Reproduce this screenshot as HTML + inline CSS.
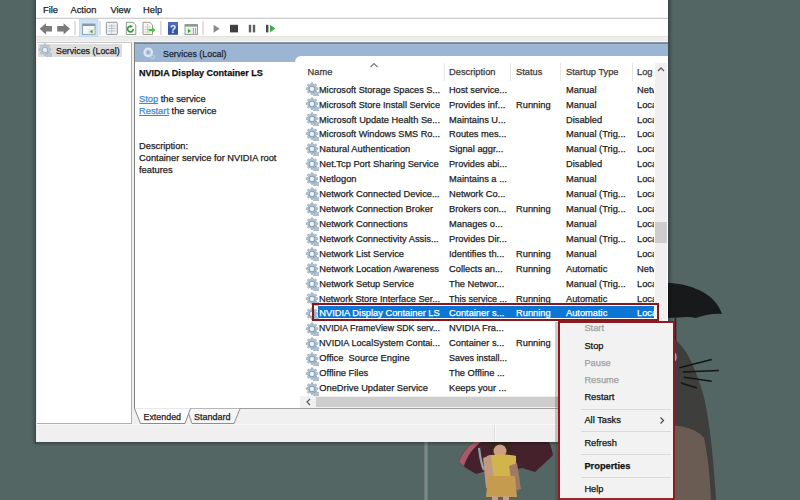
<!DOCTYPE html>
<html><head><meta charset="utf-8">
<style>
*{margin:0;padding:0;box-sizing:border-box}
html,body{width:800px;height:500px;overflow:hidden;background:#536664;font-family:"Liberation Sans",sans-serif;color:#1e1e1e}
.a{position:absolute}
.t{position:absolute;white-space:pre;font-size:9.3px;line-height:12px;-webkit-text-stroke:0.25px currentColor}
</style></head><body>
<svg width="0" height="0" style="position:absolute"><defs>
<symbol id="gr" viewBox="0 0 14 14">
<path d="M6.2 0.8h1.6l0.3 1.5 1.2 0.5 1.3-0.9 1.1 1.1-0.9 1.3 0.5 1.2 1.5 0.3v1.6l-1.5 0.3-0.5 1.2 0.9 1.3-1.1 1.1-1.3-0.9-1.2 0.5-0.3 1.5h-1.6l-0.3-1.5-1.2-0.5-1.3 0.9-1.1-1.1 0.9-1.3-0.5-1.2-1.5-0.3v-1.6l1.5-0.3 0.5-1.2-0.9-1.3 1.1-1.1 1.3 0.9 1.2-0.5z" fill="#b4c6d4" stroke="#8499ab" stroke-width="0.55"/>
<circle cx="7" cy="7" r="2.9" fill="#dbeaf5" stroke="#7890a5" stroke-width="0.9"/>
<circle cx="6.8" cy="6.8" r="1.3" fill="#f6fbff"/>
<path d="M10.6 9.2h1l0.2 0.9 0.8 0.5 0.8-0.4 0.5 0.8-0.6 0.6v1l0.6 0.6-0.5 0.8-0.8-0.4-0.8 0.5-0.2 0.9h-1l-0.2-0.9-0.8-0.5-0.8 0.4-0.5-0.8 0.6-0.6v-1l-0.6-0.6 0.5-0.8 0.8 0.4 0.8-0.5z" fill="#b0c3d2" stroke="#8197a9" stroke-width="0.5"/>
</symbol></defs></svg>
<svg class="a" style="left:0;top:0" width="800" height="500" viewBox="0 0 800 500">
<rect x="424" y="440" width="4" height="60" fill="#6d7a79"/><rect x="425.5" y="440" width="1" height="60" fill="#8a9694"/>
<path d="M459 462 C462 452 468 446 474 442 L549 442 C551 446 552 450 553 455 L546 462 L535 472 L522 468 L505 472 L490 470 L476 474 L466 468 Z" fill="#45222b"/>
<path d="M459 462 C462 453 468 446 474 442 L481 442 C473 448 467 456 464 466 Z" fill="#a85a6a"/>
<path d="M479 448 C480 456 481 464 484 470" stroke="#93a3a3" stroke-width="2.2" fill="none"/>
<path d="M489 442 L512 442 L512 452 C508 457 493 457 489 452 Z" fill="#3a2620"/>
<ellipse cx="500" cy="451" rx="6.5" ry="6.5" fill="#cf9f86"/>
<path d="M487 456 C492 454 508 454 516 456 L516 476 L488 476 Z" fill="#d1b44c"/>
<path d="M483 458 L491 455 L495 486 L486 488 Z" fill="#c09a80"/>
<path d="M509 466 L517 463 L521 489 L513 491 Z" fill="#9e7a66"/>
<path d="M488 476 L515 476 L517 497 L486 497 Z" fill="#c59b50"/>
<rect x="492" y="496" width="6" height="4" fill="#c8a088"/><rect x="503" y="496" width="6" height="4" fill="#c8a088"/>
<path d="M667 283 C688 283 708 292 716 303 C719 307 721 311 722 314 C714 313 704 315 696 318 C688 316 678 318 667 318 Z" fill="#17191a"/>
<rect x="674.5" y="317" width="1.8" height="24" fill="#262828"/>
<path d="M667 335 C672 336 680 343 686 352 C691 360 696 372 702 390 C708 410 713 450 716 500 L667 500 Z" fill="#3e3e3d"/>
<ellipse cx="675" cy="357" rx="1.6" ry="4" fill="#a9a6a2"/>
<path d="M667 426 C678 424 692 428 700 434 L704 438 C708 456 710 478 711 500 L667 500 Z" fill="#6a5b53"/>
<path d="M679.3 367.7 L711.7 359.6 M682.9 372 L719 370.4 M683.8 377.2 L711.7 381.2 M681 383 L697 388" stroke="#151515" stroke-width="1.5" fill="none"/>
</svg>
<div class="a" style="left:31px;top:0px;width:4px;height:444px;background:linear-gradient(90deg,rgba(0,0,0,0),rgba(0,0,0,.18))"></div>
<div class="a" style="left:35px;top:0px;width:1px;height:443px;background:rgba(40,50,50,.55)"></div>
<div class="a" style="left:668px;top:0px;width:5px;height:446px;background:linear-gradient(90deg,rgba(0,0,0,.3),rgba(0,0,0,0))"></div>
<div class="a" style="left:35px;top:442px;width:633px;height:4px;background:linear-gradient(rgba(0,0,0,.3),rgba(0,0,0,0))"></div>
<div class="a" style="left:36px;top:0px;width:632px;height:442px;background:#f0f0f0"></div>
<div class="a" style="left:36px;top:0px;width:632px;height:17px;background:#fff"></div>
<div class="a" style="left:36px;top:18px;width:632px;height:1px;background:#cfcfcf"></div>
<div class="t" style="left:43px;top:3.78px;font-size:9.300px;color:#1e1e1e">File</div>
<div class="t" style="left:70.5px;top:3.78px;font-size:9.300px;color:#1e1e1e">Action</div>
<div class="t" style="left:110.5px;top:3.78px;font-size:9.300px;color:#1e1e1e">View</div>
<div class="t" style="left:143px;top:3.78px;font-size:9.300px;color:#1e1e1e">Help</div>
<div class="a" style="left:36px;top:19px;width:632px;height:17px;background:#fff"></div>
<div class="a" style="left:36px;top:36px;width:632px;height:1px;background:#e2e2e2"></div>
<div class="a" style="left:36px;top:37px;width:632px;height:4px;background:#ececec"></div>
<div class="a" style="left:36px;top:41px;width:632px;height:1px;background:#f6f6f6"></div>
<svg class="a" style="left:0;top:0" width="300" height="42" viewBox="0 0 300 42">
<!-- back arrow -->
<path d="M39.6 28.8 L46 23.2 L46 26 L52 26 L52 31.6 L46 31.6 L46 34.4 Z" fill="#7b7b7b"/>
<!-- forward arrow -->
<path d="M70 28.8 L63.6 23.2 L63.6 26 L57.2 26 L57.2 31.6 L63.6 31.6 L63.6 34.4 Z" fill="#7b7b7b"/>
<rect x="74.5" y="21" width="1" height="14" fill="#c4c4c4"/>
<!-- pressed button -->
<rect x="79.5" y="19.5" width="18.5" height="17" fill="#cce4f7" stroke="#b8d8f2" stroke-width="0.8"/>
<rect x="82.5" y="24" width="12.5" height="10.4" fill="#f4f6f8" stroke="#8c9aa6" stroke-width="0.9"/>
<rect x="82.5" y="24" width="12.5" height="2" fill="#8c9aa6"/>
<rect x="88.5" y="29" width="6" height="5.2" fill="#d8f0d0"/>
<path d="M92.5 29.8 L90 31.6 L92.5 33.4 Z" fill="#3a9a3a"/>
<rect x="99.5" y="21" width="1" height="14" fill="#c4c4c4"/>
<!-- properties -->
<rect x="106.3" y="22.3" width="11" height="12.2" rx="1" fill="#eef2f4" stroke="#8d969c" stroke-width="1"/>
<path d="M108 26 H115.5 M108 28.5 H115.5 M108 31 H115.5 M111.7 24 V33.5" stroke="#b6c0c6" stroke-width="0.9"/>
<!-- refresh -->
<path d="M126.3 22.3 H133 L135.8 25 V34.5 H126.3 Z" fill="#f6f8f6" stroke="#8f9a92" stroke-width="1"/>
<path d="M133.2 29 A2.8 2.8 0 1 1 131 26.3" stroke="#2f9a3c" stroke-width="1.6" fill="none"/>
<path d="M130.2 24.8 L132.8 26.3 L130.4 28 Z" fill="#2f9a3c"/>
<!-- export -->
<path d="M143 22.3 H149.7 L152.5 25 V34.5 H143 Z" fill="#f8f8f2" stroke="#9a9a90" stroke-width="1"/>
<path d="M144.5 27 H151 M144.5 29.5 H151 M144.5 32 H151 M147.5 24 V33.5" stroke="#c8c4a8" stroke-width="0.8"/>
<path d="M148.5 29 H152 V27 L155.5 30 L152 33 V31 H148.5 Z" fill="#4cbf4c"/>
<rect x="160.4" y="21" width="1" height="14" fill="#c4c4c4"/>
<!-- help -->
<rect x="168" y="22" width="10" height="12.8" fill="#3756a6"/>
<rect x="168" y="22" width="10" height="4" fill="#5a7cc4" opacity="0.6"/>
<text x="173" y="32.6" font-family="Liberation Sans" font-weight="bold" font-size="10.5" fill="#e8eefc" text-anchor="middle">?</text>
<!-- mmc -->
<rect x="185" y="24.6" width="12.5" height="10" fill="#f3f5f3" stroke="#8c9490" stroke-width="0.9"/>
<rect x="185" y="24.6" width="12.5" height="2" fill="#8c9490"/>
<rect x="186.5" y="28" width="5" height="6" fill="#d9f1d0"/>
<path d="M188 29 L190.8 31 L188 33 Z" fill="#3a9a3a"/>
<path d="M193.3 28 V34 M195.6 28 V34" stroke="#8c9490" stroke-width="0.9"/>
<rect x="202.5" y="21" width="1" height="14" fill="#c4c4c4"/>
<!-- play -->
<path d="M213.6 24.8 L219.6 28.8 L213.6 32.8 Z" fill="#8a8a8a"/>
<!-- stop -->
<rect x="230" y="24.8" width="8" height="7.6" fill="#3f3f3f"/>
<!-- pause -->
<rect x="248.8" y="24.8" width="2.4" height="7.6" fill="#5f5f5f"/>
<rect x="252.8" y="24.8" width="2.4" height="7.6" fill="#5f5f5f"/>
<!-- restart -->
<rect x="266" y="24.8" width="2.4" height="7.6" fill="#4a4a4a"/>
<path d="M270 24.8 L275.4 28.6 L270 32.4 Z" fill="#3db04a"/>
</svg>

<div class="a" style="left:37px;top:42px;width:95px;height:382px;background:#fff;border:1px solid #b0b0b0;border-top-color:#c8c8c8;border-left:none"></div>
<div class="a" style="left:38px;top:44px;width:84px;height:13px;background:#dddddd"></div>
<div class="t" style="left:56px;top:44.52px;font-size:8.900px;color:#1e1e1e">Services (Local)</div>
<svg class="a" style="left:37.6px;top:42.8px;opacity:.7" width="14" height="14"><use href="#gr"/></svg>
<div class="a" style="left:134px;top:42px;width:534px;height:1px;background:#8b95a0"></div>
<div class="a" style="left:134px;top:42px;width:1px;height:367px;background:#7f7f7f"></div>
<div class="a" style="left:135px;top:43px;width:533px;height:19px;background:#9cb5d2;border-top:1px solid #71839a"></div>
<div class="t" style="left:163px;top:47.93px;font-size:8.850px;color:#1a2533">Services (Local)</div>
<svg class="a" style="left:140px;top:44px" width="18" height="18"><circle cx="8.2" cy="8.4" r="3.8" fill="#b4c8dc" stroke="#dfeaf6" stroke-width="2"/><circle cx="8.2" cy="8.4" r="1.2" fill="#8ea4ba"/><circle cx="12.5" cy="13" r="1.8" fill="none" stroke="#c4d4e4" stroke-width="1"/></svg>
<div class="a" style="left:135px;top:62px;width:165px;height:346px;background:#fff"></div>
<div class="a" style="left:295px;top:56px;width:373px;height:340px;background:#fff;border-top-left-radius:6px"></div>
<div class="t" style="left:139px;top:67.16px;font-size:9.050px;font-weight:bold;color:#111">NVIDIA Display Container LS</div>
<div class="t" style="left:139px;top:93.48px;font-size:9.300px;"><u style="color:#3b8ad9">Stop</u> the service</div>
<div class="t" style="left:139px;top:105.28px;font-size:9.300px;"><u style="color:#3b8ad9">Restart</u> the service</div>
<div class="t" style="left:139px;top:139.98px;font-size:9.300px;">Description:</div>
<div class="t" style="left:139px;top:151.78px;font-size:9.300px;">Container service for NVIDIA root</div>
<div class="t" style="left:139px;top:163.78px;font-size:9.300px;">features</div>
<div class="t" style="left:307.5px;top:66.38px;font-size:9.300px;color:#3a3a3a">Name</div>
<div class="t" style="left:449px;top:66.38px;font-size:9.300px;color:#3a3a3a">Description</div>
<div class="t" style="left:516px;top:66.38px;font-size:9.300px;color:#3a3a3a">Status</div>
<div class="t" style="left:566px;top:66.38px;font-size:9.300px;color:#3a3a3a">Startup Type</div>
<div class="t" style="left:637px;top:66.38px;font-size:9.300px;color:#3a3a3a">Log</div>
<div class="a" style="left:444px;top:63px;width:1px;height:18px;background:#e6e6e6"></div>
<div class="a" style="left:510px;top:63px;width:1px;height:18px;background:#e6e6e6"></div>
<div class="a" style="left:560px;top:63px;width:1px;height:18px;background:#e6e6e6"></div>
<div class="a" style="left:632px;top:63px;width:1px;height:18px;background:#e6e6e6"></div>
<div class="a" style="left:300px;top:63px;width:353.5px;height:333px;overflow:hidden">
<svg class="a" style="left:4.5px;top:19.200000000000003px" width="14" height="14"><use href="#gr"/></svg>
<div class="t" style="left:19.30000000000001px;top:20.68px;font-size:9.300px;transform:scaleX(0.9836);transform-origin:0 0;color:#1e1e1e">Microsoft Storage Spaces S...</div>
<div class="t" style="left:149px;top:20.68px;font-size:9.300px;transform:scaleX(0.9845);transform-origin:0 0;color:#1e1e1e">Host service...</div>
<div class="t" style="left:266px;top:20.68px;font-size:9.300px;color:#1e1e1e">Manual</div>
<div class="t" style="left:337px;top:20.68px;font-size:9.300px;color:#1e1e1e">Netw</div>
<svg class="a" style="left:4.5px;top:34.2px" width="14" height="14"><use href="#gr"/></svg>
<div class="t" style="left:19.30000000000001px;top:35.60px;font-size:9.300px;transform:scaleX(0.9837);transform-origin:0 0;color:#1e1e1e">Microsoft Store Install Service</div>
<div class="t" style="left:149px;top:35.60px;font-size:9.300px;color:#1e1e1e">Provides inf...</div>
<div class="t" style="left:216px;top:35.60px;font-size:9.300px;color:#1e1e1e">Running</div>
<div class="t" style="left:266px;top:35.60px;font-size:9.300px;color:#1e1e1e">Manual</div>
<div class="t" style="left:337px;top:35.60px;font-size:9.300px;color:#1e1e1e">Loca</div>
<svg class="a" style="left:4.5px;top:49.2px" width="14" height="14"><use href="#gr"/></svg>
<div class="t" style="left:19.30000000000001px;top:50.52px;font-size:9.300px;transform:scaleX(0.9961);transform-origin:0 0;color:#1e1e1e">Microsoft Update Health Se...</div>
<div class="t" style="left:149px;top:50.52px;font-size:9.300px;color:#1e1e1e">Maintains U...</div>
<div class="t" style="left:266px;top:50.52px;font-size:9.300px;color:#1e1e1e">Disabled</div>
<div class="t" style="left:337px;top:50.52px;font-size:9.300px;color:#1e1e1e">Loca</div>
<svg class="a" style="left:4.5px;top:64.2px" width="14" height="14"><use href="#gr"/></svg>
<div class="t" style="left:19.30000000000001px;top:65.44px;font-size:9.300px;transform:scaleX(0.9838);transform-origin:0 0;color:#1e1e1e">Microsoft Windows SMS Ro...</div>
<div class="t" style="left:149px;top:65.44px;font-size:9.300px;color:#1e1e1e">Routes mes...</div>
<div class="t" style="left:266px;top:65.44px;font-size:9.300px;color:#1e1e1e">Manual (Trig...</div>
<div class="t" style="left:337px;top:65.44px;font-size:9.300px;color:#1e1e1e">Loca</div>
<svg class="a" style="left:4.5px;top:79.19999999999999px" width="14" height="14"><use href="#gr"/></svg>
<div class="t" style="left:19.30000000000001px;top:80.36px;font-size:9.300px;color:#1e1e1e">Natural Authentication</div>
<div class="t" style="left:149px;top:80.36px;font-size:9.300px;color:#1e1e1e">Signal aggr...</div>
<div class="t" style="left:266px;top:80.36px;font-size:9.300px;color:#1e1e1e">Manual (Trig...</div>
<div class="t" style="left:337px;top:80.36px;font-size:9.300px;color:#1e1e1e">Loca</div>
<svg class="a" style="left:4.5px;top:94.19999999999999px" width="14" height="14"><use href="#gr"/></svg>
<div class="t" style="left:19.30000000000001px;top:95.28px;font-size:9.300px;color:#1e1e1e">Net.Tcp Port Sharing Service</div>
<div class="t" style="left:149px;top:95.28px;font-size:9.300px;transform:scaleX(0.9842);transform-origin:0 0;color:#1e1e1e">Provides abi...</div>
<div class="t" style="left:266px;top:95.28px;font-size:9.300px;color:#1e1e1e">Disabled</div>
<div class="t" style="left:337px;top:95.28px;font-size:9.300px;color:#1e1e1e">Loca</div>
<svg class="a" style="left:4.5px;top:109.19999999999999px" width="14" height="14"><use href="#gr"/></svg>
<div class="t" style="left:19.30000000000001px;top:110.20px;font-size:9.300px;color:#1e1e1e">Netlogon</div>
<div class="t" style="left:149px;top:110.20px;font-size:9.300px;color:#1e1e1e">Maintains a ...</div>
<div class="t" style="left:266px;top:110.20px;font-size:9.300px;color:#1e1e1e">Manual</div>
<div class="t" style="left:337px;top:110.20px;font-size:9.300px;color:#1e1e1e">Loca</div>
<svg class="a" style="left:4.5px;top:124.19999999999999px" width="14" height="14"><use href="#gr"/></svg>
<div class="t" style="left:19.30000000000001px;top:125.12px;font-size:9.300px;color:#1e1e1e">Network Connected Device...</div>
<div class="t" style="left:149px;top:125.12px;font-size:9.300px;color:#1e1e1e">Network Co...</div>
<div class="t" style="left:266px;top:125.12px;font-size:9.300px;color:#1e1e1e">Manual (Trig...</div>
<div class="t" style="left:337px;top:125.12px;font-size:9.300px;color:#1e1e1e">Loca</div>
<svg class="a" style="left:4.5px;top:139.2px" width="14" height="14"><use href="#gr"/></svg>
<div class="t" style="left:19.30000000000001px;top:140.04px;font-size:9.300px;color:#1e1e1e">Network Connection Broker</div>
<div class="t" style="left:149px;top:140.04px;font-size:9.300px;color:#1e1e1e">Brokers con...</div>
<div class="t" style="left:216px;top:140.04px;font-size:9.300px;color:#1e1e1e">Running</div>
<div class="t" style="left:266px;top:140.04px;font-size:9.300px;color:#1e1e1e">Manual (Trig...</div>
<div class="t" style="left:337px;top:140.04px;font-size:9.300px;color:#1e1e1e">Loca</div>
<svg class="a" style="left:4.5px;top:154.2px" width="14" height="14"><use href="#gr"/></svg>
<div class="t" style="left:19.30000000000001px;top:154.96px;font-size:9.300px;color:#1e1e1e">Network Connections</div>
<div class="t" style="left:149px;top:154.96px;font-size:9.300px;color:#1e1e1e">Manages o...</div>
<div class="t" style="left:266px;top:154.96px;font-size:9.300px;color:#1e1e1e">Manual</div>
<div class="t" style="left:337px;top:154.96px;font-size:9.300px;color:#1e1e1e">Loca</div>
<svg class="a" style="left:4.5px;top:169.2px" width="14" height="14"><use href="#gr"/></svg>
<div class="t" style="left:19.30000000000001px;top:169.88px;font-size:9.300px;color:#1e1e1e">Network Connectivity Assis...</div>
<div class="t" style="left:149px;top:169.88px;font-size:9.300px;color:#1e1e1e">Provides Dir...</div>
<div class="t" style="left:266px;top:169.88px;font-size:9.300px;color:#1e1e1e">Manual (Trig...</div>
<div class="t" style="left:337px;top:169.88px;font-size:9.300px;color:#1e1e1e">Loca</div>
<svg class="a" style="left:4.5px;top:184.2px" width="14" height="14"><use href="#gr"/></svg>
<div class="t" style="left:19.30000000000001px;top:184.80px;font-size:9.300px;color:#1e1e1e">Network List Service</div>
<div class="t" style="left:149px;top:184.80px;font-size:9.300px;color:#1e1e1e">Identifies th...</div>
<div class="t" style="left:216px;top:184.80px;font-size:9.300px;color:#1e1e1e">Running</div>
<div class="t" style="left:266px;top:184.80px;font-size:9.300px;color:#1e1e1e">Manual</div>
<div class="t" style="left:337px;top:184.80px;font-size:9.300px;color:#1e1e1e">Loca</div>
<svg class="a" style="left:4.5px;top:199.2px" width="14" height="14"><use href="#gr"/></svg>
<div class="t" style="left:19.30000000000001px;top:199.72px;font-size:9.300px;color:#1e1e1e">Network Location Awareness</div>
<div class="t" style="left:149px;top:199.72px;font-size:9.300px;color:#1e1e1e">Collects an...</div>
<div class="t" style="left:216px;top:199.72px;font-size:9.300px;color:#1e1e1e">Running</div>
<div class="t" style="left:266px;top:199.72px;font-size:9.300px;color:#1e1e1e">Automatic</div>
<div class="t" style="left:337px;top:199.72px;font-size:9.300px;color:#1e1e1e">Netw</div>
<svg class="a" style="left:4.5px;top:214.2px" width="14" height="14"><use href="#gr"/></svg>
<div class="t" style="left:19.30000000000001px;top:214.64px;font-size:9.300px;color:#1e1e1e">Network Setup Service</div>
<div class="t" style="left:149px;top:214.64px;font-size:9.300px;color:#1e1e1e">The Networ...</div>
<div class="t" style="left:266px;top:214.64px;font-size:9.300px;color:#1e1e1e">Manual (Trig...</div>
<div class="t" style="left:337px;top:214.64px;font-size:9.300px;color:#1e1e1e">Loca</div>
<svg class="a" style="left:4.5px;top:229.2px" width="14" height="14"><use href="#gr"/></svg>
<div class="t" style="left:19.30000000000001px;top:229.56px;font-size:9.300px;transform:scaleX(0.9919);transform-origin:0 0;color:#1e1e1e">Network Store Interface Ser...</div>
<div class="t" style="left:149px;top:229.56px;font-size:9.300px;transform:scaleX(0.9675);transform-origin:0 0;color:#1e1e1e">This service ...</div>
<div class="t" style="left:216px;top:229.56px;font-size:9.300px;color:#1e1e1e">Running</div>
<div class="t" style="left:266px;top:229.56px;font-size:9.300px;color:#1e1e1e">Automatic</div>
<div class="t" style="left:337px;top:229.56px;font-size:9.300px;color:#1e1e1e">Loca</div>
<div class="a" style="left:18px;top:242.60000000000002px;width:335.5px;height:12.2px;background:#0b76d4"></div>
<svg class="a" style="left:4.5px;top:244.2px" width="14" height="14"><use href="#gr"/></svg>
<div class="t" style="left:19.30000000000001px;top:244.48px;font-size:9.300px;color:#fff">NVIDIA Display Container LS</div>
<div class="t" style="left:149px;top:244.48px;font-size:9.300px;color:#fff">Container s...</div>
<div class="t" style="left:216px;top:244.48px;font-size:9.300px;color:#fff">Running</div>
<div class="t" style="left:266px;top:244.48px;font-size:9.300px;color:#fff">Automatic</div>
<div class="t" style="left:337px;top:244.48px;font-size:9.300px;color:#fff">Loca</div>
<svg class="a" style="left:4.5px;top:259.2px" width="14" height="14"><use href="#gr"/></svg>
<div class="t" style="left:19.30000000000001px;top:259.40px;font-size:9.300px;transform:scaleX(0.9390);transform-origin:0 0;color:#1e1e1e">NVIDIA FrameView SDK serv...</div>
<div class="t" style="left:149px;top:259.40px;font-size:9.300px;color:#1e1e1e">NVIDIA Fra...</div>
<div class="t" style="left:266px;top:259.40px;font-size:9.300px;color:#1e1e1e">Manual</div>
<div class="t" style="left:337px;top:259.40px;font-size:9.300px;color:#1e1e1e">Loca</div>
<svg class="a" style="left:4.5px;top:274.2px" width="14" height="14"><use href="#gr"/></svg>
<div class="t" style="left:19.30000000000001px;top:274.32px;font-size:9.300px;transform:scaleX(0.9795);transform-origin:0 0;color:#1e1e1e">NVIDIA LocalSystem Contai...</div>
<div class="t" style="left:149px;top:274.32px;font-size:9.300px;color:#1e1e1e">Container s...</div>
<div class="t" style="left:216px;top:274.32px;font-size:9.300px;color:#1e1e1e">Running</div>
<div class="t" style="left:266px;top:274.32px;font-size:9.300px;color:#1e1e1e">Automatic</div>
<div class="t" style="left:337px;top:274.32px;font-size:9.300px;color:#1e1e1e">Loca</div>
<svg class="a" style="left:4.5px;top:289.2px" width="14" height="14"><use href="#gr"/></svg>
<div class="t" style="left:19.30000000000001px;top:289.24px;font-size:9.300px;color:#1e1e1e">Office  Source Engine</div>
<div class="t" style="left:149px;top:289.24px;font-size:9.300px;transform:scaleX(0.9673);transform-origin:0 0;color:#1e1e1e">Saves install...</div>
<div class="t" style="left:266px;top:289.24px;font-size:9.300px;color:#1e1e1e">Manual</div>
<div class="t" style="left:337px;top:289.24px;font-size:9.300px;color:#1e1e1e">Loca</div>
<svg class="a" style="left:4.5px;top:304.2px" width="14" height="14"><use href="#gr"/></svg>
<div class="t" style="left:19.30000000000001px;top:304.16px;font-size:9.300px;color:#1e1e1e">Offline Files</div>
<div class="t" style="left:149px;top:304.16px;font-size:9.300px;color:#1e1e1e">The Offline ...</div>
<div class="t" style="left:266px;top:304.16px;font-size:9.300px;color:#1e1e1e">Manual (Trig...</div>
<div class="t" style="left:337px;top:304.16px;font-size:9.300px;color:#1e1e1e">Loca</div>
<svg class="a" style="left:4.5px;top:319.2px" width="14" height="14"><use href="#gr"/></svg>
<div class="t" style="left:19.30000000000001px;top:319.08px;font-size:9.300px;color:#1e1e1e">OneDrive Updater Service</div>
<div class="t" style="left:149px;top:319.08px;font-size:9.300px;color:#1e1e1e">Keeps your ...</div>
<div class="t" style="left:266px;top:319.08px;font-size:9.300px;color:#1e1e1e">Manual</div>
<div class="t" style="left:337px;top:319.08px;font-size:9.300px;color:#1e1e1e">Loca</div>
</div>
<div class="a" style="left:655px;top:63px;width:12px;height:333px;background:#f0f0f0"></div>
<div class="a" style="left:655px;top:222px;width:12px;height:21px;background:#cdcdcd"></div>
<svg class="a" style="left:655px;top:63px" width="12" height="12"><path d="M3 8 L6 5 L9 8" stroke="#606060" stroke-width="1.3" fill="none"/></svg>
<div class="a" style="left:302px;top:396px;width:365px;height:12px;background:#f0f0f0"></div>
<div class="a" style="left:316px;top:397px;width:339px;height:10px;background:#cdcdcd"></div>
<svg class="a" style="left:302px;top:396px" width="12" height="12"><path d="M8 3 L5 6 L8 9" stroke="#606060" stroke-width="1.3" fill="none"/></svg>
<svg class="a" style="left:369px;top:62px" width="10" height="6"><path d="M1.5 5 L5 1.6 L8.5 5" stroke="#7a7a7a" stroke-width="1.2" fill="none"/></svg>
<div class="a" style="left:134px;top:408px;width:534px;height:1px;background:#a0a0a0"></div>
<svg class="a" style="left:130px;top:408px" width="120" height="17">
<path d="M57 0.8 L62 15.5 L104 15.5 L110 0.8" fill="#f6f6f6" stroke="#8f8f8f" stroke-width="1"/>
<path d="M4.5 0.5 L10.5 15.5 L55 15.5 L60.5 0.5 Z" fill="#fff"/>
<path d="M4.5 0.5 L10.5 15.5 L55 15.5 L60.5 0.5" fill="none" stroke="#8a8a8a" stroke-width="1"/>
<path d="M5 0.5 L60 0.5" stroke="#e8e8e8" stroke-width="1"/>
</svg>
<div class="t" style="left:143.5px;top:410.92px;font-size:8.900px;color:#222">Extended</div>
<div class="t" style="left:194px;top:410.88px;font-size:9.000px;color:#222">Standard</div>
<div class="a" style="left:36px;top:424px;width:632px;height:1px;background:#fafafa"></div>
<div class="a" style="left:36px;top:425px;width:632px;height:17px;background:#f0f0f0"></div>
<div class="a" style="left:494px;top:425px;width:1px;height:17px;background:#dadada"></div>
<div class="a" style="left:495px;top:425px;width:1px;height:17px;background:#fbfbfb"></div>
<div class="a" style="left:312px;top:303px;width:347px;height:18px;border:2px solid #86191f"></div>
<div class="a" style="left:555px;top:322px;width:2.5px;height:178px;background:rgba(90,40,40,.25)"></div>
<div class="a" style="left:557.5px;top:321px;width:117.5px;height:179px;background:#f2f2f2;border:2px solid #8a1c22;border-top-width:2.5px;border-right-width:2.5px"></div>
<div class="a" style="left:559.5px;top:497.5px;width:113px;height:2.5px;background:#9b2528"></div>
<div class="t" style="left:584.4px;top:322.38px;font-size:9.300px;color:#a0a0a0;">Start</div>
<div class="t" style="left:584.4px;top:339.78px;font-size:9.300px;color:#111;">Stop</div>
<div class="t" style="left:584.4px;top:356.78px;font-size:9.300px;color:#a0a0a0;">Pause</div>
<div class="t" style="left:584.4px;top:373.98px;font-size:9.300px;color:#a0a0a0;">Resume</div>
<div class="t" style="left:584.4px;top:391.18px;font-size:9.300px;color:#111;">Restart</div>
<div class="t" style="left:584.4px;top:414.18px;font-size:9.300px;color:#111;">All Tasks</div>
<div class="t" style="left:584.4px;top:436.78px;font-size:9.300px;color:#111;">Refresh</div>
<div class="t" style="left:584.4px;top:459.78px;font-size:9.300px;color:#111;font-weight:bold">Properties</div>
<div class="t" style="left:584.4px;top:482.78px;font-size:9.300px;color:#111;">Help</div>
<div class="a" style="left:581px;top:409px;width:90px;height:1px;background:#dadada"></div>
<div class="a" style="left:581px;top:431px;width:90px;height:1px;background:#dadada"></div>
<div class="a" style="left:581px;top:454px;width:90px;height:1px;background:#dadada"></div>
<div class="a" style="left:581px;top:477px;width:90px;height:1px;background:#dadada"></div>
<svg class="a" style="left:658px;top:416px" width="8" height="9"><path d="M2.5 1.5 L5.5 4.5 L2.5 7.5" stroke="#4a4a4a" stroke-width="1.2" fill="none"/></svg>
</body></html>
